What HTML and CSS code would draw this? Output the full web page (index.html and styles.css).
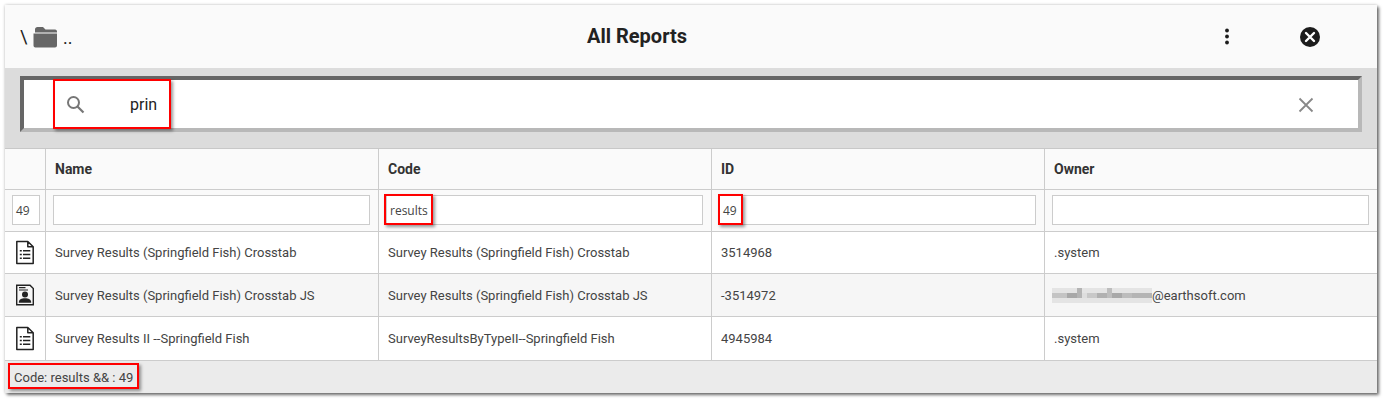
FILE: index.html
```html
<!DOCTYPE html>
<html lang="en">
<head>
<meta charset="utf-8">
<title>All Reports</title>
<link rel="stylesheet" href="styles.css">
</head>
<body>
<main class="window">
  <header class="titlebar">
    <div class="crumbs">
      <span class="slash">\</span>
      <svg class="folder" width="26" height="22" viewBox="0 0 26 22"><path fill="#666" d="M3 3.500 C3 2 4 1 5.500 1 H11 L13.500 3.500 H23 C24.500 3.500 25 4.500 25 5.500 V6.500 H3 Z M1.500 7.500 H25 V19.500 C25 20.800 24 21.500 23 21.500 H3.500 C2.300 21.500 1.500 20.800 1.500 19.500 Z"/></svg>
      <span class="dots">..</span>
    </div>
    <h1 class="title">All Reports</h1>
    <div class="actions">
      <svg class="kebab" width="6" height="17" viewBox="0 0 6 17"><circle cx="3" cy="2.500" r="1.900" fill="#1c1c1c"/><circle cx="3" cy="8.500" r="1.900" fill="#1c1c1c"/><circle cx="3" cy="14.500" r="1.900" fill="#1c1c1c"/></svg>
      <svg class="close" width="20" height="20" viewBox="0 0 20 20"><circle cx="10" cy="10" r="10" fill="#1c1c1c"/><path d="M6 6 L14 14 M14 6 L6 14" stroke="#fff" stroke-width="2.400" stroke-linecap="round"/></svg>
    </div>
  </header>

  <section class="searchband">
    <div class="searchbox">
      <svg class="mag" width="19" height="19" viewBox="0 0 19 19"><circle cx="7.500" cy="7.500" r="5.500" fill="none" stroke="#777" stroke-width="2"/><path d="M11.500 11.500 L17.500 17.500" stroke="#777" stroke-width="2.200"/></svg>
      <span class="query">prin</span>
      <svg class="clear" width="16" height="16" viewBox="0 0 16 16"><path d="M1.500 1.500 L14.500 14.500 M14.500 1.500 L1.500 14.500" stroke="#888" stroke-width="1.800"/></svg>
    </div>
  </section>

  <section class="grid">
    <div class="cell head"></div>
    <div class="cell head">Name</div>
    <div class="cell head">Code</div>
    <div class="cell head">ID</div>
    <div class="cell head last">Owner</div>

    <div class="cell filter first"><span class="count">49</span></div>
    <div class="cell filter"><span class="field"></span></div>
    <div class="cell filter"><span class="field">results</span></div>
    <div class="cell filter"><span class="field">49</span></div>
    <div class="cell filter last"><span class="field"></span></div>

    <div class="cell icon">
      <svg width="20" height="25" viewBox="0 0 20 25"><use href="#doc-list"/></svg>
    </div>
    <div class="cell">Survey Results (Springfield Fish) Crosstab</div>
    <div class="cell">Survey Results (Springfield Fish) Crosstab</div>
    <div class="cell">3514968</div>
    <div class="cell last">.system</div>

    <div class="cell icon alt">
      <svg width="20" height="22" viewBox="0 0 20 22"><path fill="none" stroke="#222" stroke-width="1.400" d="M1.700 1.200 H15 L18.300 4.500 V20.800 H1.700 Z"/><path stroke="#222" stroke-width="1.200" d="M4 3.600 H10.500 M4 6 H13"/><circle cx="10" cy="10.500" r="3" fill="#222"/><path fill="#222" d="M3.800 18.800 C3.800 15.200 6.500 14.300 10 14.300 C13.500 14.300 16.200 15.200 16.200 18.800 Z"/></svg>
    </div>
    <div class="cell alt">Survey Results (Springfield Fish) Crosstab JS</div>
    <div class="cell alt">Survey Results (Springfield Fish) Crosstab JS</div>
    <div class="cell alt">-3514972</div>
    <div class="cell alt last owner">
      <svg class="redacted" width="100" height="15" viewBox="0 0 20 3" preserveAspectRatio="none" shape-rendering="crispEdges">
        <rect width="20" height="3" fill="#e4e4e4"/>
        <rect x="0" y="1" width="3" height="1" fill="#c4c4c4"/>
        <rect x="3" y="1" width="3" height="1" fill="#a8a8a8"/>
        <rect x="5" y="0" width="1" height="2" fill="#b4b4b4"/>
        <rect x="6" y="1" width="1" height="1" fill="#dedede"/>
        <rect x="7" y="1" width="2" height="1" fill="#c8c8c8"/>
        <rect x="9" y="1" width="2" height="1" fill="#b0b0b0"/>
        <rect x="11" y="0" width="1" height="2" fill="#bdbdbd"/>
        <rect x="12" y="1" width="2" height="1" fill="#a8a8a8"/>
        <rect x="14" y="1" width="2" height="1" fill="#bcbcbc"/>
        <rect x="16" y="1" width="4" height="1" fill="#b4b4b4"/>
      </svg><span>@earthsoft.com</span>
    </div>

    <div class="cell icon">
      <svg width="20" height="25" viewBox="0 0 20 25"><use href="#doc-list"/></svg>
    </div>
    <div class="cell">Survey Results II --Springfield Fish</div>
    <div class="cell">SurveyResultsByTypeII--Springfield Fish</div>
    <div class="cell">4945984</div>
    <div class="cell last">.system</div>
  </section>

  <footer class="status">Code: results &amp;&amp; : 49</footer>

  <span class="mark mark-search"></span>
  <span class="mark mark-code"></span>
  <span class="mark mark-id"></span>
  <span class="mark mark-status"></span>
</main>

<svg class="defs" width="0" height="0">
  <symbol id="doc-list" viewBox="0 0 20 25">
    <path fill="none" stroke="#222" stroke-width="1.500" stroke-linejoin="round" d="M1.800 1.500 H12.800 L18.200 6.800 V23.500 H1.800 Z M12.800 1.500 V6.800 H18.200"/>
    <path stroke="#222" stroke-width="1.500" d="M4.800 10.800 H6.800 M8 10.800 H15.300 M4.800 14.500 H6.800 M8 14.500 H15.300 M4.800 18.200 H6.800 M8 18.200 H15.300"/>
  </symbol>
</svg>
</body>
</html>
```

FILE: styles.css
```css
* { box-sizing: border-box; }
html, body { margin: 0; padding: 0; background: #fff; }
body {
  width: 1385px;
  height: 402px;
  padding: 5px 8px 0 5px;
  font-family: Roboto, "Liberation Sans", sans-serif;
  color: #333;
  overflow: hidden;
}
.window {
  position: relative;
  width: 1372px;
  height: 388px;
  display: flex;
  flex-direction: column;
  background: #fff;
  box-shadow: 2px 2px 3px rgba(0,0,0,.55), 0 0 3px rgba(0,0,0,.22);
}
.titlebar {
  height: 63px;
  flex: none;
  background: #fafafa;
  display: grid;
  grid-template-columns: 567px auto 1fr;
  align-items: center;
  padding: 0 57px 0 15px;
}
.crumbs { display: flex; align-items: center; color: #222; font-size: 18px; }
.slash { width: 12px; }
.folder { margin-right: 3px; }
.dots { font-size: 18px; margin-top: 2px; margin-left: 2px; }
.title { margin: 0 0 2px; font-size: 20px; font-weight: 700; color: #222; line-height: 24px; }
.actions { display: flex; justify-content: flex-end; align-items: center; gap: 70px; }
.kebab { margin-bottom: 1px; }
.searchband {
  height: 81px;
  flex: none;
  background: #dcdcdc;
  padding: 8px 15px 16px;
  border-bottom: 1px solid #c8c8c8;
}
.searchbox {
  height: 56px;
  width: 1342px;
  background: #fff;
  border: 4px solid;
  border-color: #666 #b8b8b8 #b8b8b8 #666;
  display: flex;
  align-items: center;
  padding: 0 44px 0 42px;
}
.query { margin-left: 45px; font-size: 16px; color: #222; flex: 1; }
.clear { margin-top: 1px; }
.grid {
  flex: none;
  display: grid;
  grid-template-columns: 41px 333px 333px 333px 332px;
  grid-template-rows: 41px 42px 42px 43px 44px;
  font-size: 13px;
  color: #444;
  background: #fff;
}
.cell {
  display: flex;
  align-items: center;
  padding: 0 9px;
  border-right: 1px solid #ccc;
  border-bottom: 1px solid #ccc;
  white-space: nowrap;
}
.cell.last { border-right: 0; }
.head { background: #fafafa; font-size: 14px; font-weight: 700; color: #333; }
.filter { background: #fafafa; padding: 0 8px 1px 7px; }
.filter.first { padding: 0 0 1px 7px; }
.count, .field {
  height: 30px;
  border: 1px solid #ccc;
  background: #fff;
  display: flex;
  align-items: center;
  font-family: "Open Sans", sans-serif;
  font-size: 12px;
}
.count { width: 28px; padding-left: 3px; }
.field { width: 317px; padding-left: 3px; }
.icon { justify-content: center; padding: 0; }
.alt { background: #f6f6f6; }
.owner { padding-left: 7px; }
.redacted { flex: none; }
.status {
  height: 32px;
  flex: none;
  background: #ebebeb;
  display: flex;
  align-items: center;
  padding: 0 9px;
  font-size: 13px;
  color: #444;
}
.mark {
  position: absolute;
  border: 2px solid #f00;
  box-shadow: 2px 2px 3px rgba(0,0,0,.4);
  pointer-events: none;
}
.mark-search { left: 48px; top: 74px; width: 118px; height: 50px; }
.mark-code { left: 379px; top: 189px; width: 49px; height: 31px; }
.mark-id { left: 713px; top: 189px; width: 25px; height: 31px; }
.mark-status { left: 3px; top: 358px; width: 131px; height: 26px; }
.defs { position: absolute; }
```
